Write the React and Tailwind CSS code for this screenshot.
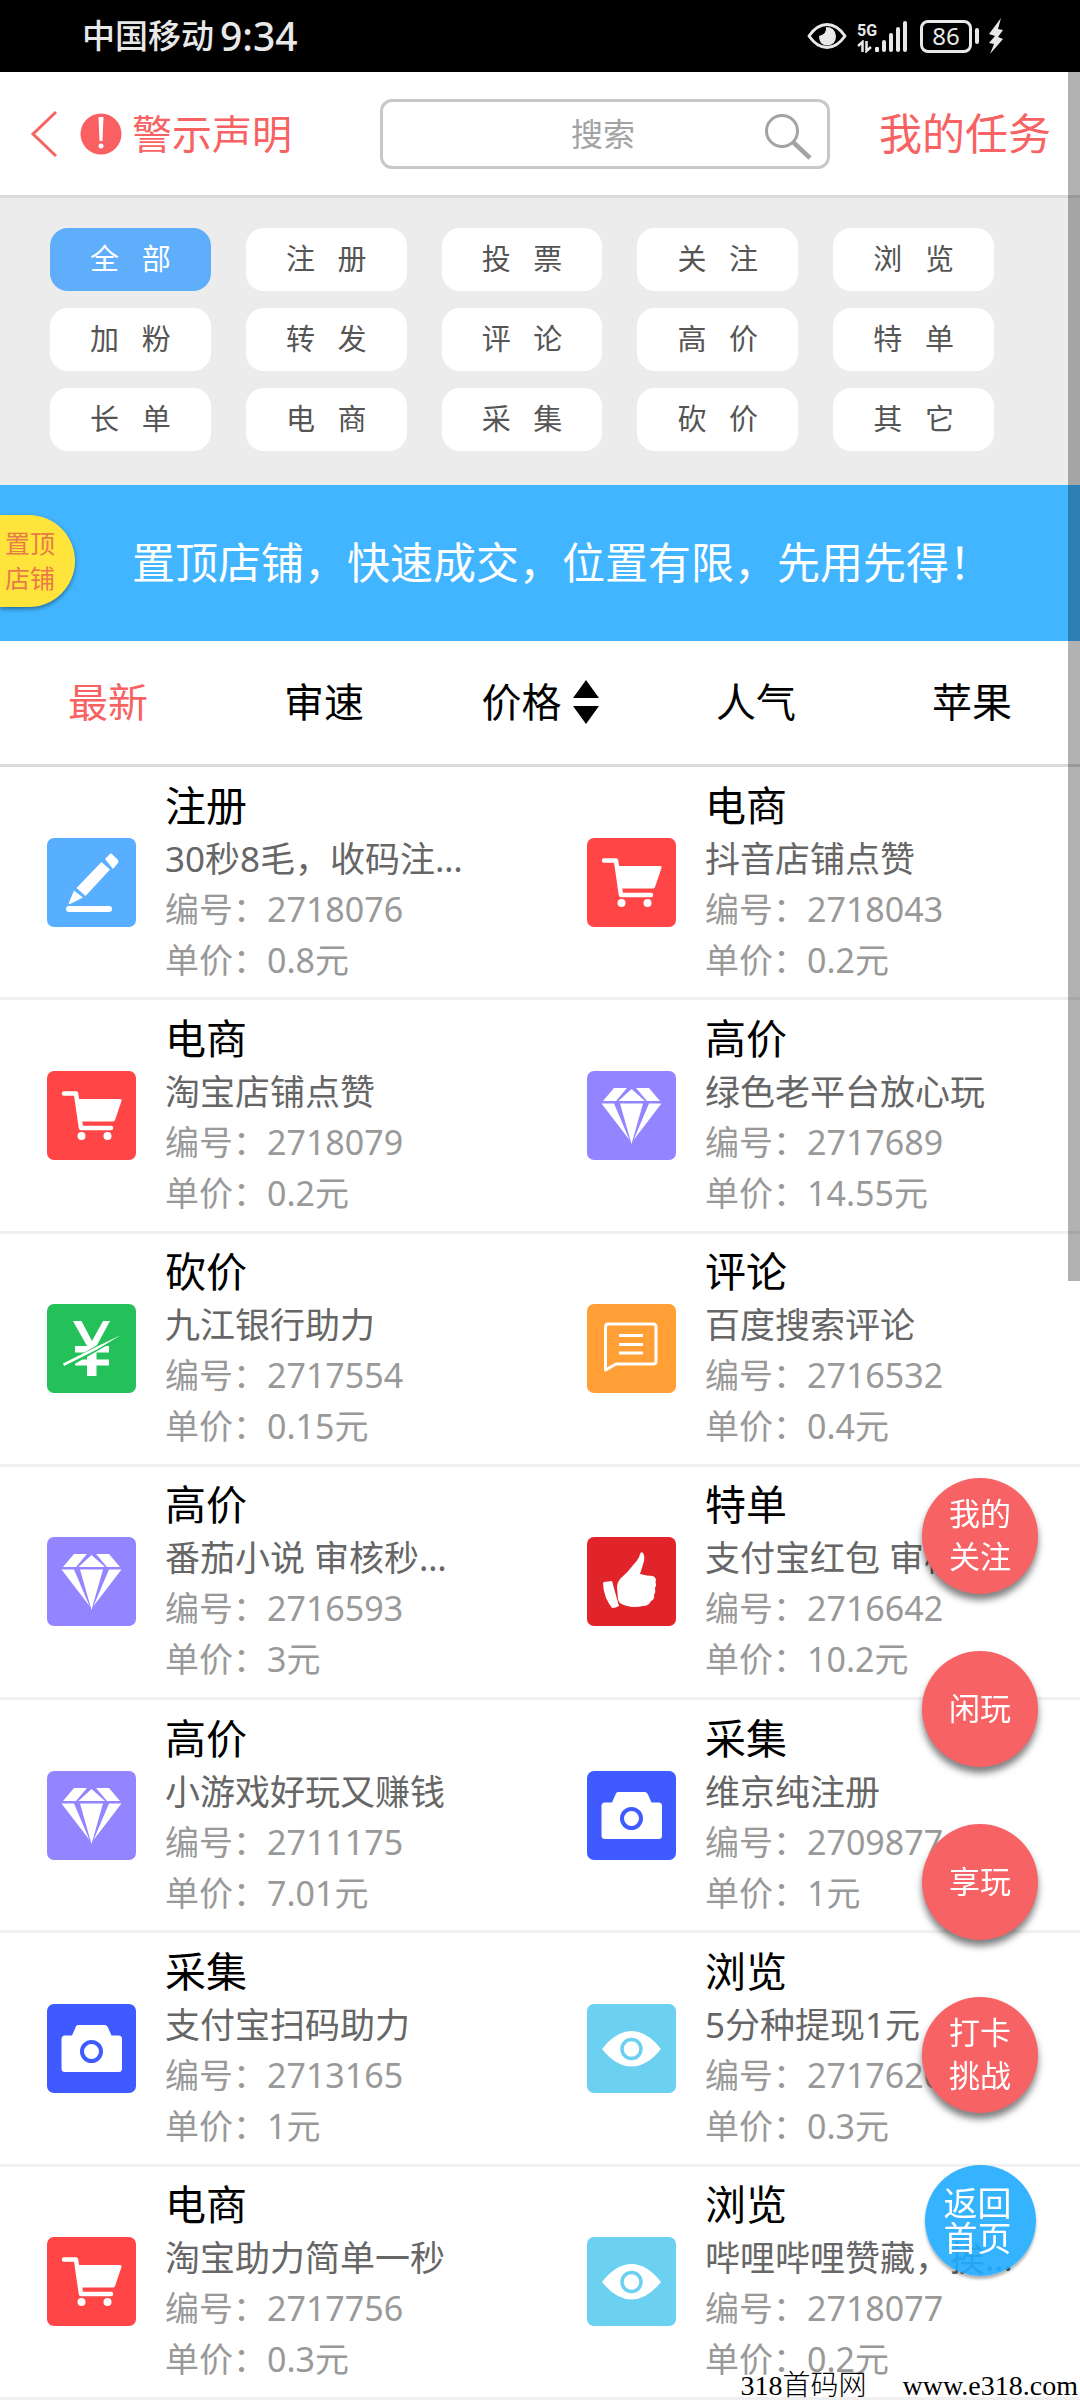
import { useState } from 'react'
import clsx from 'clsx'

const CATEGORIES = [
  '全部', '注册', '投票', '关注', '浏览',
  '加粉', '转发', '评论', '高价', '特单',
  '长单', '电商', '采集', '砍价', '其它',
]

const SORTS = ['最新', '审速', '价格', '人气', '苹果']

const TASKS = [
  { type: '注册', title: '30秒8毛，收码注…', no: '2718076', price: '0.8' },
  { type: '电商', title: '抖音店铺点赞', no: '2718043', price: '0.2' },
  { type: '电商', title: '淘宝店铺点赞', no: '2718079', price: '0.2' },
  { type: '高价', title: '绿色老平台放心玩', no: '2717689', price: '14.55' },
  { type: '砍价', title: '九江银行助力', no: '2717554', price: '0.15' },
  { type: '评论', title: '百度搜索评论', no: '2716532', price: '0.4' },
  { type: '高价', title: '番茄小说 审核秒…', no: '2716593', price: '3' },
  { type: '特单', title: '支付宝红包 审核…', no: '2716642', price: '10.2' },
  { type: '高价', title: '小游戏好玩又赚钱', no: '2711175', price: '7.01' },
  { type: '采集', title: '维京纯注册', no: '2709877', price: '1' },
  { type: '采集', title: '支付宝扫码助力', no: '2713165', price: '1' },
  { type: '浏览', title: '5分种提现1元', no: '2717620', price: '0.3' },
  { type: '电商', title: '淘宝助力简单一秒', no: '2717756', price: '0.3' },
  { type: '浏览', title: '哔哩哔哩赞藏，挨…', no: '2718077', price: '0.2' },
]

const SHORTCUTS = [['我的', '关注'], ['闲玩'], ['享玩'], ['打卡', '挑战']]

const PencilIcon = () => (
  <>
    <path d="M58 21 L63 16 Q64 15 65 16 L71 22 Q72 23.500 71 25 L66 31 Z" />
    <path d="M54.500 24 L63 31.500 L38.500 58 L29.500 50 Z" />
    <path d="M27 52.500 L36 59.500 L23 66 Q21 66.500 22 64.500 Z" />
    <rect x="19" y="68" width="46" height="6" rx="3" />
  </>
)

const CartIcon = () => (
  <>
    <path d="M17 22.500 H29 L34 57 H64" fill="none" stroke="#fff" strokeWidth="4.500" strokeLinecap="round" strokeLinejoin="round" />
    <path d="M31 28 H73 Q75 28 74.500 30 L68 49 Q67.500 50.500 66 50.500 H34 Z" />
    <circle cx="34.500" cy="65" r="4" />
    <circle cx="60.500" cy="65" r="4" />
  </>
)

const DiamondIcon = () => (
  <>
    <path d="M27 17 H40 L29 30 H16 Z" />
    <path d="M44.500 18 L58 30 H31.500 Z" />
    <path d="M62 17 H49 L60 30 H73 Z" />
    <path d="M14.500 32.500 H27 L42.500 69 Z" />
    <path d="M33 32.500 H56 L44.500 73 Z" />
    <path d="M74.500 32.500 H62 L46.500 69 Z" />
  </>
)

const YuanIcon = () => (
  <>
    <path d="M26 17 H34.500 L45 37 L56 17 H63 L49.500 42 H62 V48.500 H49.500 V55.500 H62 V61.500 H49.500 V72 H40 V61.500 H28 V55.500 H40 V48.500 H28 V42 H40 Z" />
    <path d="M18 62.500 L66 35" stroke="#24c15a" strokeWidth="5" />
    <path d="M16 59.500 L50 42.500 L74 31 L50 45.500 L17 62 Z" />
  </>
)

const CommentIcon = () => (
  <>
    <path
      d="M21 20 H66 Q69 20 69 23 V57 Q69 60 66 60 H29 L18.500 66 V23 Q18.500 20 21 20 Z"
      fill="none"
      stroke="#fff"
      strokeWidth="3"
      strokeLinejoin="round"
    />
    <path d="M32 31.500 H56 M32 40.500 H56 M32 49 H56" stroke="#fff" strokeWidth="3" />
  </>
)

const ThumbIcon = () => (
  <>
    <path d="M55.500 15.500 Q58 18 57 24 Q55 31 53 37 Q60 39 66 39 Q70 41 68.500 45 Q70 48 68 51 Q69 55 67 58 Q68 62 64 64 Q62 69 56 69 Q47 71 40 69 Q31 67 31 62 L30 51 Q30 45 34 41 Q41 35 47 27 Q52 22 53 17 Q54 14.500 55.500 15.500 Z" />
    <path d="M17 45 L25 44 Q28 55 32 69 Q29 71 25 71 Q22 67 19 61 Q16 53 16 46 Z" />
  </>
)

const CameraIcon = () => (
  <>
    <path d="M31 21 H58 Q60 21 61 23.500 L64.500 31.500 H71.500 Q75 31.500 75 35 V64.500 Q75 68 71.500 68 H18 Q14.500 68 14.500 64.500 V35 Q14.500 31.500 18 31.500 H25 L28.500 23.500 Q29 21 31 21 Z" />
    <circle cx="44.500" cy="47.500" r="9.500" stroke="#3f5bff" strokeWidth="4" />
  </>
)

const EyeIcon = () => (
  <>
    <path d="M15 45 Q29 27 44.500 27 Q60 27 74 45 Q60 62.500 44.500 62.500 Q29 62.500 15 45 Z" />
    <circle cx="44.500" cy="45" r="9.500" stroke="#6cd0f1" strokeWidth="3.500" />
  </>
)

const TYPE_ICONS = {
  注册: { bg: 'bg-[#58aeff]', Icon: PencilIcon },
  电商: { bg: 'bg-[#ff4545]', Icon: CartIcon },
  高价: { bg: 'bg-[#9384ff]', Icon: DiamondIcon },
  砍价: { bg: 'bg-[#24c15a]', Icon: YuanIcon },
  评论: { bg: 'bg-[#ff9f36]', Icon: CommentIcon },
  特单: { bg: 'bg-[#e0242a]', Icon: ThumbIcon },
  采集: { bg: 'bg-[#3f5bff]', Icon: CameraIcon },
  浏览: { bg: 'bg-[#6cd0f1]', Icon: EyeIcon },
}

function StatusBar() {
  return (
    <div className="flex h-[72px] shrink-0 items-center justify-between bg-black pl-[82px] pr-[76px] text-[#e8e8e8]">
      <div className="flex items-center gap-1.5 font-medium">
        <span className="text-[33px] leading-[40px]">中国移动</span>
        <span className="text-[39px] leading-[40px]">9:34</span>
      </div>
      <div className="flex items-center">
        <svg className="h-[28px] w-[40px]" viewBox="0 0 40 28" fill="none">
          <path d="M2 14 Q10 2.500 20 2.500 Q30 2.500 38 14 Q30 25.500 20 25.500 Q10 25.500 2 14 Z" stroke="currentColor" strokeWidth="3" strokeLinejoin="round" />
          <path d="M19 5 Q20 12 12 14 Q12 23 20 23.500 Q29 23 29 14 Q28 5 19 5 Z" fill="currentColor" />
        </svg>
        <div className="ml-[10px] flex items-end">
          <div className="flex w-[18px] flex-col">
            <span className="font-['Liberation_Sans_Narrow','Roboto',sans-serif] text-[16px] font-bold leading-[18px]">5G</span>
            <svg className="h-[13px] w-[16px]" viewBox="0 0 16 13" fill="none" stroke="currentColor" strokeWidth="2.500">
              <path d="M1 6 L5.500 2 V12 M9.500 1 V11 L14 7" />
            </svg>
          </div>
          <svg className="h-[33px] w-[34px]" viewBox="0 0 34 33" fill="currentColor">
            <rect x="0" y="27" width="4" height="5" rx="1" />
            <rect x="7" y="20" width="4" height="12" rx="2" />
            <rect x="14" y="13" width="4" height="19" rx="2" />
            <rect x="21" y="7" width="4" height="25" rx="2" />
            <rect x="28" y="1" width="4" height="31" rx="2" />
          </svg>
        </div>
        <div className="ml-[11px] flex h-[33px] w-[52px] items-center justify-center rounded-[8px] border-3 border-[#e8e8e8] text-[24px] leading-[26px]">
          86
        </div>
        <div className="ml-[3px] h-[16px] w-[4px] rounded-full bg-[#e8e8e8]" />
        <svg className="ml-[9px] h-[36px] w-[16px]" viewBox="0 0 16 36" fill="currentColor">
          <path d="M13 0 L1 16 L7 18 L1 25 L6 26 L2 36 L15 21 L10 19 L15 12 L10 11 Z" />
        </svg>
      </div>
    </div>
  )
}

function Header() {
  return (
    <header className="flex h-[126px] shrink-0 items-center border-b-3 border-[#dadada] bg-white pl-[30px] pr-[29px] text-[#f76262]">
      <button type="button" aria-label="返回" className="shrink-0">
        <svg className="h-[48px] w-[28px]" viewBox="0 0 28 48" fill="none" stroke="currentColor" strokeWidth="3">
          <path d="M26 2 L3 24 L26 46" />
        </svg>
      </button>
      <a href="#notice" className="ml-[22px] flex shrink-0 items-center gap-[10px]">
        <svg className="size-[42px]" viewBox="0 0 42 42">
          <circle cx="21" cy="21" r="20.500" fill="#fa6062" />
          <path d="M18.500 4 H23.500 L22.500 28 H19.500 Z" fill="#fff" />
          <circle cx="21" cy="33" r="2.500" fill="#fff" />
        </svg>
        <span className="text-[40px] leading-[48px]">警示声明</span>
      </a>
      <label className="relative ml-[88px] mr-[49px] block min-w-0 flex-1">
        <input
          type="text"
          aria-label="搜索"
          placeholder="搜索"
          className="h-[70px] w-full rounded-[12px] border-3 border-[#c8c8c8] pl-[56px] pr-[60px] text-center text-[32px] text-gray-700 placeholder:text-[#a3a3a3]"
        />
        <svg className="absolute right-[18px] top-[14px] size-[48px]" viewBox="0 0 48 48" fill="none" stroke="#a3a3a3">
          <circle cx="18" cy="18" r="15.500" strokeWidth="3" />
          <path d="M29 29 L46 45" strokeWidth="4.500" />
        </svg>
      </label>
      <a href="#tasks" className="shrink-0 text-[43px] leading-[50px]">我的任务</a>
    </header>
  )
}

function CategoryGrid() {
  const [active, setActive] = useState('全部')

  return (
    <div className="grid shrink-0 grid-cols-5 gap-x-[35px] gap-y-[17px] bg-[#ececec] pb-[34px] pl-[50px] pr-[86px] pt-[30px]">
      {CATEGORIES.map((name) => (
        <button
          key={name}
          type="button"
          onClick={() => setActive(name)}
          className={clsx(
            'h-[63px] whitespace-pre rounded-[18px] pb-[2px] text-[29px] leading-[40px]',
            active === name ? 'bg-[#5eaefb] text-white' : 'bg-white text-[#555]'
          )}
        >
          {name.split('').join('   ')}
        </button>
      ))}
    </div>
  )
}

function PinnedBanner() {
  return (
    <div className="relative flex h-[156px] shrink-0 items-center bg-[#41b5ff] pl-[132px] text-[43px] text-white">
      <span className="absolute left-0 top-[30px] flex h-[92px] w-[75px] items-center rounded-r-full bg-[#ffe53b] pl-[5px] text-[25px] leading-[35px] text-[#ea7a48] shadow-[0_2px_4px_rgba(0,0,0,0.4)]">
        置顶
        <br />
        店铺
      </span>
      <p className="whitespace-nowrap leading-[56px]">置顶店铺，快速成交，位置有限，先用先得！</p>
    </div>
  )
}

function SortTabs() {
  const [active, setActive] = useState('最新')

  return (
    <nav className="grid h-[126px] shrink-0 grid-cols-5 border-b-3 border-[#dadada] bg-white">
      {SORTS.map((name) => (
        <button
          key={name}
          type="button"
          onClick={() => setActive(name)}
          className={clsx(
            'flex items-center justify-center gap-[11px] pb-[2px] text-[40px] leading-[48px]',
            active === name ? 'text-[#f76262]' : 'text-black'
          )}
        >
          {name}
          {name === '价格' && (
            <svg className="h-[44px] w-[26px]" viewBox="0 0 26 44" fill="currentColor">
              <path d="M13 0 L26 18 H0 Z M0 26 H26 L13 44 Z" />
            </svg>
          )}
        </button>
      ))}
    </nav>
  )
}

function TaskItem({ task }) {
  const { bg, Icon } = TYPE_ICONS[task.type]

  return (
    <a
      href={`#${task.no}`}
      className="flex min-w-0 items-center gap-[29px] border-b-3 border-[#f0f0f0] pl-[47px]"
    >
      <svg className={clsx('size-[89px] shrink-0 rounded-[7px]', bg)} viewBox="0 0 89 89" fill="#fff">
        <Icon />
      </svg>
      <div className="min-w-0 whitespace-nowrap pb-[2px] text-[34px] leading-[51px] text-[#999]">
        <h3 className="text-[41px] leading-[56px] text-black">{task.type}</h3>
        <p className="text-[35px] leading-[51px] text-[#666]">{task.title}</p>
        <p>编号：{task.no}</p>
        <p>单价：{task.price}元</p>
      </div>
    </a>
  )
}

function FloatingMenu() {
  return (
    <div className="fixed bottom-[124px] right-[42px] flex flex-col items-center gap-[57px] text-white">
      {SHORTCUTS.map((lines) => (
        <button
          key={lines[0]}
          type="button"
          className="flex size-[116px] flex-col items-center justify-center rounded-full bg-[#f76265] pb-[2px] text-[31px] leading-[43px] shadow-[0_6px_7px_rgba(0,0,0,0.5)]"
        >
          {lines.map((line) => (
            <span key={line}>{line}</span>
          ))}
        </button>
      ))}
      <button
        type="button"
        className="-mt-[5px] flex size-[111px] flex-col items-center justify-center rounded-full bg-[#1fabff]/90 pr-[5px] text-[34px] leading-[35px] shadow-[0_3px_3px_rgba(0,0,0,0.3)]"
      >
        <span>返回</span>
        <span>首页</span>
      </button>
    </div>
  )
}

export default function App() {
  return (
    <div
      lang="zh-CN"
      className="relative flex min-h-screen flex-col overflow-hidden bg-white font-['Noto_Sans','Noto_Sans_CJK_SC',sans-serif]"
    >
      <StatusBar />
      <Header />
      <CategoryGrid />
      <PinnedBanner />
      <SortTabs />
      <main className="grid flex-1 auto-rows-fr grid-cols-2">
        {TASKS.map((task) => (
          <TaskItem key={task.no} task={task} />
        ))}
      </main>
      <div className="absolute right-0 top-[72px] h-[1209px] w-[12px] bg-black/30" />
      <FloatingMenu />
      <div className="absolute bottom-0 right-[2px] flex gap-[36px] font-['Liberation_Serif','Noto_Sans_CJK_SC',serif] text-[28px] leading-[28px] text-black">
        <span className="font-light">318首码网</span>
        <span>www.e318.com</span>
      </div>
    </div>
  )
}
